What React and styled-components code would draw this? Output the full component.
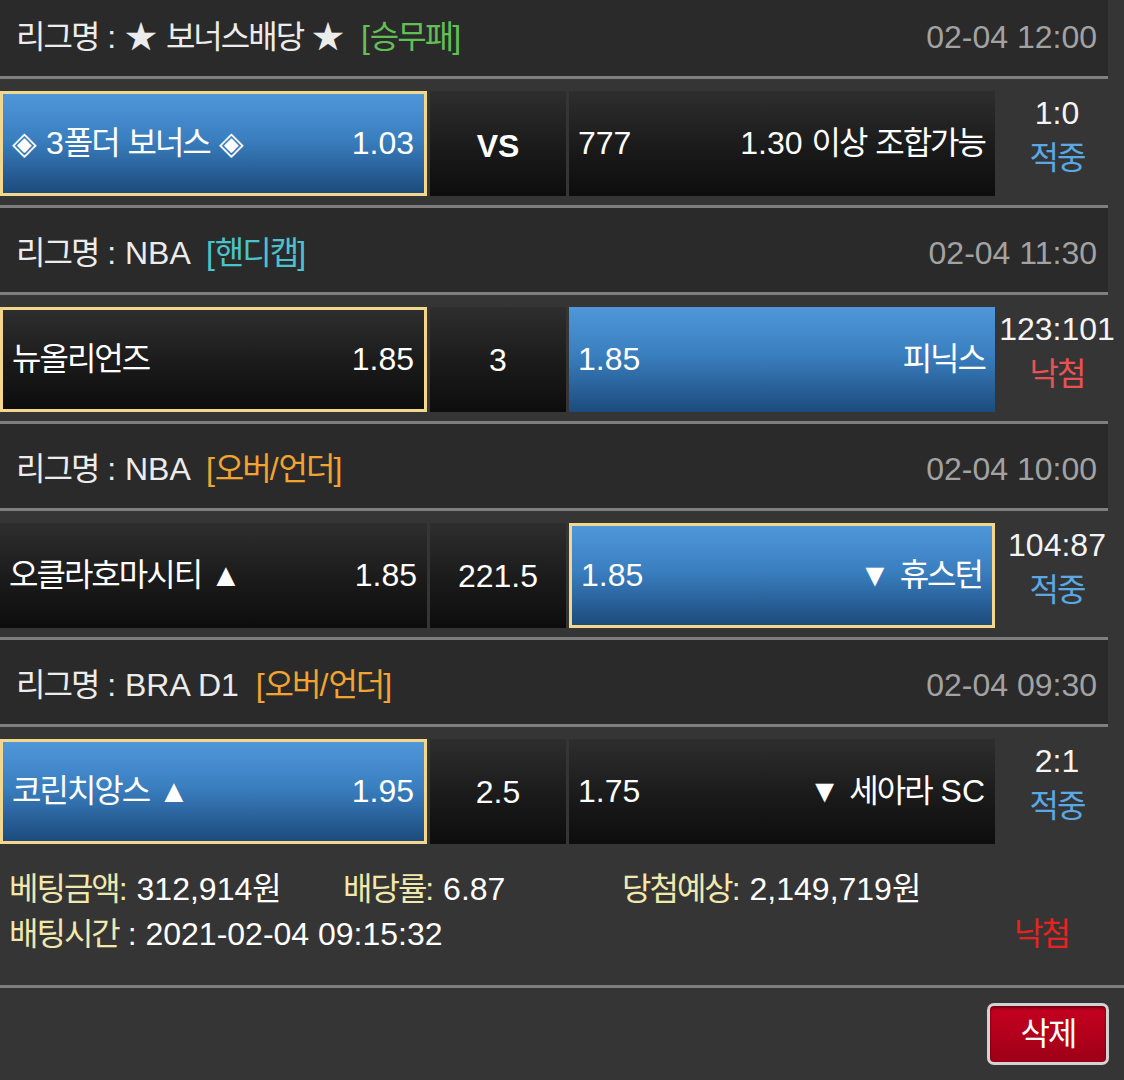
import React from "react";
import styled, { createGlobalStyle } from "styled-components";

const GlobalStyle = createGlobalStyle`
  html, body { margin: 0; padding: 0; background: #353535; }
  body {
    font-family: "Liberation Sans", "Noto Sans CJK KR", sans-serif;
    color: #ffffff;
  }
  * { box-sizing: border-box; }
`;

const Page = styled.div`
  width: 1124px;
  height: 1080px;
  overflow: hidden;
  background: #353535;
  font-size: 32px;
  line-height: 1.2;
`;

const List = styled.div`
  margin-top: -8px;
`;

const HangulRun = styled.span`
  letter-spacing: -2px;
`;

function Txt({ children }) {
  const parts = String(children).split(/([\u1100-\u11FF\u3130-\u318F\uAC00-\uD7AF]+)/);
  return parts.map((p, i) =>
    i % 2 === 1 ? <HangulRun key={i}>{p}</HangulRun> : <React.Fragment key={i}>{p}</React.Fragment>
  );
}

const LeagueHeader = styled.div`
  width: 1108px;
  height: 84px;
  background: #2a2a2a;
  display: flex;
  align-items: center;
  justify-content: space-between;
  padding: 6px 11px 0 16px;
  white-space: nowrap;
`;

const LeagueName = styled.div`
  color: #ececec;
`;

const tagColors = {
  win: "#62bf56",
  handi: "#4cc3cc",
  ou: "#f2a330",
};

const Tag = styled.span`
  margin-left: 8px;
  color: ${(p) => tagColors[p.$kind]};
`;

const Time = styled.div`
  color: #a2a2a2;
`;

const Divider = styled.div`
  width: ${(p) => (p.$full ? "100%" : "1108px")};
  height: 3px;
  background: #7f7f7f;
`;

const MatchRow = styled.div`
  display: flex;
  height: 126px;
  padding: 12px 0 9px;
`;

const Pick = styled.div`
  flex: 0 0 ${(p) => p.$width}px;
  display: flex;
  align-items: center;
  justify-content: space-between;
  padding: 0 10px 0 9px;
  background: ${(p) =>
    p.$win
      ? "linear-gradient(180deg, #4f97da 0%, #3a7fc0 45%, #1d4b7d 100%)"
      : "linear-gradient(180deg, #2e2e2e 0%, #1a1a1a 55%, #0d0d0d 100%)"};
  border: ${(p) => (p.$picked ? "3px solid #f2d78d" : "none")};
  white-space: nowrap;
  color: #ffffff;
`;

const LineCell = styled.div`
  flex: 0 0 136px;
  margin: 0 3px;
  display: flex;
  align-items: center;
  justify-content: center;
  padding-top: ${(p) => (p.$bold ? 6 : 2)}px;
  background: linear-gradient(180deg, #2e2e2e 0%, #1a1a1a 55%, #0d0d0d 100%);
  font-weight: ${(p) => (p.$bold ? 700 : 400)};
  color: #ffffff;
`;

const Score = styled.div`
  flex: 0 0 124px;
  display: flex;
  flex-direction: column;
  align-items: center;
  line-height: 45px;
  white-space: nowrap;
  color: #f4f4f4;
`;

const Result = styled.div`
  color: ${(p) => (p.$hit ? "#5ba8e3" : "#e85252")};
`;

const Summary = styled.div`
  padding: 14px 0 28px 9px;
  line-height: 45px;
  white-space: nowrap;
`;

const SummaryGrid = styled.div`
  display: grid;
  grid-template-columns: 334px 279px 1fr;
`;

const SummaryLine = styled.div`
  display: flex;
  justify-content: space-between;
  padding-right: 55px;
`;

const Label = styled.span`
  color: #f1e8ae;
`;

const Value = styled.span`
  color: #ffffff;
`;

const FinalResult = styled.span`
  color: #e8231f;
`;

const Footer = styled.div`
  display: flex;
  justify-content: flex-end;
  padding: 15px 15px 0 0;
`;

const DeleteButton = styled.button`
  width: 122px;
  height: 62px;
  padding: 0;
  border: 3px solid #d2d2d2;
  border-radius: 7px;
  background: linear-gradient(180deg, #c4001f 0%, #b0001b 60%, #9c0018 100%);
  box-shadow: inset 0 2px 3px rgba(0, 0, 0, 0.45);
  color: #ffffff;
  font-family: inherit;
  font-size: 32px;
  line-height: 1;
`;

const matches = [
  {
    league: "리그명 : ★ 보너스배당 ★",
    tag: "[승무패]",
    kind: "win",
    time: "02-04 12:00",
    home: { name: "◈ 3폴더 보너스 ◈", odds: "1.03", win: true, picked: true },
    line: "VS",
    bold: true,
    away: { name: "1.30 이상 조합가능", odds: "777", win: false, picked: false },
    score: "1:0",
    hit: true,
  },
  {
    league: "리그명 : NBA",
    tag: "[핸디캡]",
    kind: "handi",
    time: "02-04 11:30",
    home: { name: "뉴올리언즈", odds: "1.85", win: false, picked: true },
    line: "3",
    away: { name: "피닉스", odds: "1.85", win: true, picked: false },
    score: "123:101",
    hit: false,
  },
  {
    league: "리그명 : NBA",
    tag: "[오버/언더]",
    kind: "ou",
    time: "02-04 10:00",
    home: { name: "오클라호마시티 ▲", odds: "1.85", win: false, picked: false },
    line: "221.5",
    away: { name: "▼ 휴스턴", odds: "1.85", win: true, picked: true },
    score: "104:87",
    hit: true,
  },
  {
    league: "리그명 : BRA D1",
    tag: "[오버/언더]",
    kind: "ou",
    time: "02-04 09:30",
    home: { name: "코린치앙스 ▲", odds: "1.95", win: true, picked: true },
    line: "2.5",
    away: { name: "▼ 세아라 SC", odds: "1.75", win: false, picked: false },
    score: "2:1",
    hit: true,
  },
];

export default function App() {
  return (
    <>
      <GlobalStyle />
      <Page>
        <List>
          {matches.map((m, i) => (
            <React.Fragment key={i}>
              <LeagueHeader>
                <LeagueName>
                  <Txt>{m.league}</Txt> <Tag $kind={m.kind}><Txt>{m.tag}</Txt></Tag>
                </LeagueName>
                <Time>{m.time}</Time>
              </LeagueHeader>
              <Divider />
              <MatchRow>
                <Pick $width={427} $win={m.home.win} $picked={m.home.picked}>
                  <span><Txt>{m.home.name}</Txt></span>
                  <span>{m.home.odds}</span>
                </Pick>
                <LineCell $bold={m.bold}>{m.line}</LineCell>
                <Pick $width={426} $win={m.away.win} $picked={m.away.picked}>
                  <span>{m.away.odds}</span>
                  <span><Txt>{m.away.name}</Txt></span>
                </Pick>
                <Score>
                  <div>{m.score}</div>
                  <Result $hit={m.hit}><Txt>{m.hit ? "적중" : "낙첨"}</Txt></Result>
                </Score>
              </MatchRow>
              {i < matches.length - 1 && <Divider />}
            </React.Fragment>
          ))}
          <Summary>
            <SummaryGrid>
              <span><Label><Txt>베팅금액:</Txt></Label> <Value><Txt>312,914원</Txt></Value></span>
              <span><Label><Txt>배당률:</Txt></Label> <Value>6.87</Value></span>
              <span><Label><Txt>당첨예상:</Txt></Label> <Value><Txt>2,149,719원</Txt></Value></span>
            </SummaryGrid>
            <SummaryLine>
              <span><Label><Txt>배팅시간</Txt></Label> <Value>: 2021-02-04 09:15:32</Value></span>
              <FinalResult><Txt>낙첨</Txt></FinalResult>
            </SummaryLine>
          </Summary>
          <Divider $full />
          <Footer>
            <DeleteButton><Txt>삭제</Txt></DeleteButton>
          </Footer>
        </List>
      </Page>
    </>
  );
}
